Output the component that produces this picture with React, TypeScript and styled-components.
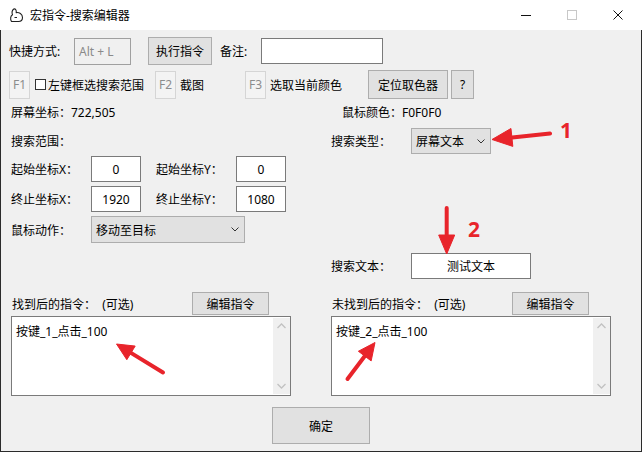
import React from 'react';
import styled, { createGlobalStyle } from 'styled-components';

const GlobalStyle = createGlobalStyle`
  html, body {
    margin: 0;
    padding: 0;
    background: #ffffff;
  }
  body {
    font-family: "Noto Sans", "Noto Sans CJK SC", sans-serif;
    font-size: 12px;
    color: #000;
  }
`;

const Window = styled.div`
  width: 642px;
  height: 452px;
  position: relative;
  overflow: hidden;
  display: flex;
  flex-direction: column;
`;

const TitleBar = styled.div`
  height: 30px;
  flex-shrink: 0;
  background: #ffffff;
  display: flex;
  align-items: center;
`;

const AppIcon = styled.svg`
  width: 16px;
  height: 16px;
  margin-left: 8px;
`;

const TitleText = styled.div`
  margin-left: 6px;
  font-size: 12px;
  flex: 1;
`;

const Controls = styled.div`
  display: flex;
  height: 30px;
  margin-right: 1px;
`;

const ControlButton = styled.div`
  width: 46px;
  height: 30px;
  display: flex;
  align-items: center;
  justify-content: center;
`;

const Body = styled.div`
  flex: 1;
  background: #f0f0f0;
  border: 1px solid #2b2b2b;
  border-top: none;
  padding-left: 8px;
  display: flex;
  flex-direction: column;
`;

const Row = styled.div<{ $top?: number; $left?: number; $h: number }>`
  display: flex;
  align-items: center;
  height: ${p => p.$h}px;
  margin-top: ${p => p.$top ?? 0}px;
  padding-left: ${p => p.$left ?? 0}px;
  flex-shrink: 0;
`;

const Cell = styled.div<{ $w: number; $ml?: number }>`
  width: ${p => p.$w}px;
  margin-left: ${p => p.$ml ?? 0}px;
  display: flex;
  align-items: center;
  flex-shrink: 0;
  white-space: pre;
`;

const Text = styled.span<{ $ml?: number }>`
  margin-left: ${p => p.$ml ?? 0}px;
  white-space: pre;
`;

const TextBox = styled.div<{ $w: number; $h: number; $center?: boolean; $readonly?: boolean }>`
  box-sizing: border-box;
  width: ${p => p.$w}px;
  height: ${p => p.$h}px;
  border: 1px solid ${p => (p.$readonly ? '#a0a0a0' : '#7a7a7a')};
  background: ${p => (p.$readonly ? '#f0f0f0' : '#ffffff')};
  color: ${p => (p.$readonly ? '#8a8a8a' : '#000')};
  display: flex;
  align-items: center;
  justify-content: ${p => (p.$center ? 'center' : 'flex-start')};
  padding-left: ${p => (p.$center ? 0 : 4)}px;
  flex-shrink: 0;
  white-space: pre;
`;

const Button = styled.div<{ $w: number; $h: number; $ml?: number }>`
  box-sizing: border-box;
  width: ${p => p.$w}px;
  height: ${p => p.$h}px;
  margin-left: ${p => p.$ml ?? 0}px;
  border: 1px solid #adadad;
  background: #e1e1e1;
  display: flex;
  align-items: center;
  justify-content: center;
  flex-shrink: 0;
`;

const FKey = styled.div`
  box-sizing: border-box;
  width: 21px;
  height: 28px;
  border: 1px solid #d5d5d5;
  background: #f3f3f3;
  color: #8c8c8c;
  display: flex;
  align-items: center;
  justify-content: center;
  flex-shrink: 0;
`;

const CheckBox = styled.div`
  box-sizing: border-box;
  width: 11px;
  height: 11px;
  margin-left: 5px;
  border: 1px solid #333333;
  background: #ffffff;
  flex-shrink: 0;
`;

const Select = styled.div<{ $w: number; $h: number }>`
  box-sizing: border-box;
  width: ${p => p.$w}px;
  height: ${p => p.$h}px;
  border: 1px solid #adadad;
  background: #e1e1e1;
  display: flex;
  align-items: center;
  justify-content: space-between;
  padding: 0 5px 0 4px;
  flex-shrink: 0;
`;

const Lower = styled.div`
  display: flex;
  margin-top: 8px;
`;

const Column = styled.div<{ $w?: number }>`
  display: flex;
  flex-direction: column;
  width: ${p => (p.$w ? `${p.$w}px` : 'auto')};
`;

const Panels = styled.div`
  display: flex;
  gap: 40px;
  margin-top: 13px;
  padding-left: 2px;
`;

const Panel = styled.div`
  width: 280px;
  display: flex;
  flex-direction: column;
`;

const TextArea = styled.div`
  box-sizing: border-box;
  margin-top: 1px;
  width: 280px;
  height: 80px;
  border: 1px solid #7a7a7a;
  background: #ffffff;
  display: flex;
`;

const AreaContent = styled.div`
  flex: 1;
  padding: 5px 0 0 4px;
  white-space: pre;
`;

const ScrollBar = styled.div`
  width: 17px;
  margin: 1px 0;
  background: #f0f0f0;
  display: flex;
  flex-direction: column;
  justify-content: space-between;
  align-items: center;
  padding: 5px 0;
  box-sizing: border-box;
`;

const Overlay = styled.svg`
  position: absolute;
  left: 0;
  top: 0;
  width: 642px;
  height: 452px;
  pointer-events: none;
`;

const Chevron = ({ up }: { up?: boolean }) => (
  <svg width="8" height="5" viewBox="0 0 8 5">
    <polyline
      points={up ? '0.5,4.5 4,1 7.5,4.5' : '0.5,0.5 4,4 7.5,0.5'}
      fill="none"
      stroke="#333"
      strokeWidth="1"
    />
  </svg>
);

const ScrollArrow = ({ up }: { up?: boolean }) => (
  <svg width="9" height="6" viewBox="0 0 9 6">
    <polyline
      points={up ? '0.5,5 4.5,1 8.5,5' : '0.5,1 4.5,5 8.5,1'}
      fill="none"
      stroke="#c2c2c2"
      strokeWidth="1.3"
    />
  </svg>
);

type Pt = [number, number];

const Arrow = ({ tail, tip, len, half }: { tail: Pt; tip: Pt; len: number; half: number }) => {
  const dx = tip[0] - tail[0];
  const dy = tip[1] - tail[1];
  const d = Math.hypot(dx, dy);
  const ux = dx / d;
  const uy = dy / d;
  const bx = tip[0] - ux * len;
  const by = tip[1] - uy * len;
  const p1 = `${bx - uy * half},${by + ux * half}`;
  const p2 = `${bx + uy * half},${by - ux * half}`;
  return (
    <g fill="#e8242b" stroke="#e8242b">
      <line x1={tail[0]} y1={tail[1]} x2={bx + ux * 2} y2={by + uy * 2} strokeWidth="4" strokeLinecap="round" />
      <polygon points={`${tip[0]},${tip[1]} ${p1} ${p2}`} strokeWidth="1" strokeLinejoin="round" />
    </g>
  );
};

const CommandPanel = ({ title, text }: { title: string; text: string }) => (
  <Panel>
    <Row $h={23}>
      <Cell $w={181}>
        <Text $ml={1}>{title}</Text>
      </Cell>
      <Button $w={77} $h={23}>编辑指令</Button>
    </Row>
    <TextArea>
      <AreaContent>{text}</AreaContent>
      <ScrollBar>
        <ScrollArrow up />
        <ScrollArrow />
      </ScrollBar>
    </TextArea>
  </Panel>
);

export default function App() {
  return (
    <>
      <GlobalStyle />
      <Window>
        <TitleBar>
          <AppIcon viewBox="0 0 16 16">
            <path
              d="M3.5 14.5 C2 12 2.5 9 4.5 7.8 C3.8 6 4 3.5 5.8 2 C7.5 1.5 8.6 3.2 8.2 5.6 C11 5 14.5 7 14.5 10.5 C14.5 13.5 12.5 14.5 10.5 14.5 Z M6.5 10.5 L9 10.5"
              fill="none"
              stroke="#222"
              strokeWidth="1.1"
              strokeLinejoin="round"
            />
          </AppIcon>
          <TitleText>宏指令-搜索编辑器</TitleText>
          <Controls>
            <ControlButton>
              <svg width="10" height="10" viewBox="0 0 10 10">
                <line x1="0" y1="5.5" x2="10" y2="5.5" stroke="#111" strokeWidth="1" />
              </svg>
            </ControlButton>
            <ControlButton>
              <svg width="10" height="10" viewBox="0 0 10 10">
                <rect x="0.5" y="0.5" width="9" height="9" fill="none" stroke="#c8c8c8" strokeWidth="1" />
              </svg>
            </ControlButton>
            <ControlButton>
              <svg width="10" height="10" viewBox="0 0 10 10">
                <path d="M0.5 0.5 L9.5 9.5 M9.5 0.5 L0.5 9.5" stroke="#111" strokeWidth="1" />
              </svg>
            </ControlButton>
          </Controls>
        </TitleBar>

        <Body>
          <Row $top={7} $h={28}>
            <Cell $w={65}>快捷方式:</Cell>
            <TextBox $w={57} $h={27} $readonly>Alt + L</TextBox>
            <Button $w={64} $h={28} $ml={17}>执行指令</Button>
            <Cell $w={41} $ml={8}>备注:</Cell>
            <TextBox $w={122} $h={26} />
          </Row>

          <Row $top={5} $h={29}>
            <Cell $w={146}>
              <FKey>F1</FKey>
              <CheckBox />
              <Text $ml={2}>左键框选搜索范围</Text>
            </Cell>
            <Cell $w={90}>
              <FKey>F2</FKey>
              <Text $ml={4}>截图</Text>
            </Cell>
            <Cell $w={123}>
              <FKey>F3</FKey>
              <Text $ml={4}>选取当前颜色</Text>
            </Cell>
            <Button $w={80} $h={29}>定位取色器</Button>
            <Button $w={23} $h={29} $ml={3}>?</Button>
          </Row>

          <Row $top={5} $h={16} $left={2}>
            <Cell $w={331}>屏幕坐标：722,505</Cell>
            <Cell $w={150}>鼠标颜色：F0F0F0</Cell>
          </Row>

          <Lower>
            <Column $w={322}>
              <Row $h={26} $left={2}>搜索范围：</Row>
              <Row $top={2} $h={26} $left={2}>
                <Cell $w={80}>起始坐标X：</Cell>
                <TextBox $w={50} $h={26} $center>0</TextBox>
                <Cell $w={80} $ml={15}>起始坐标Y：</Cell>
                <TextBox $w={50} $h={26} $center>0</TextBox>
              </Row>
              <Row $top={4} $h={26} $left={2}>
                <Cell $w={80}>终止坐标X：</Cell>
                <TextBox $w={50} $h={26} $center>1920</TextBox>
                <Cell $w={80} $ml={15}>终止坐标Y：</Cell>
                <TextBox $w={50} $h={26} $center>1080</TextBox>
              </Row>
              <Row $top={4} $h={27} $left={2}>
                <Cell $w={80}>鼠标动作：</Cell>
                <Select $w={154} $h={27}>
                  <span>移动至目标</span>
                  <Chevron />
                </Select>
              </Row>
            </Column>
            <Column>
              <Row $h={26}>
                <Cell $w={80}>搜索类型：</Cell>
                <Select $w={80} $h={26}>
                  <span>屏幕文本</span>
                  <Chevron />
                </Select>
              </Row>
              <Row $top={99} $h={26}>
                <Cell $w={80}>搜索文本：</Cell>
                <TextBox $w={120} $h={26} $center>测试文本</TextBox>
              </Row>
            </Column>
          </Lower>

          <Panels>
            <CommandPanel title="找到后的指令：  (可选)" text="按键_1_点击_100" />
            <CommandPanel title="未找到后的指令：  (可选)" text="按键_2_点击_100" />
          </Panels>

          <Row $top={11} $h={37} $left={263}>
            <Button $w={98} $h={37}>确定</Button>
          </Row>
        </Body>

        <Overlay viewBox="0 0 642 452">
          <Arrow tail={[550, 133.5]} tip={[492, 139.5]} len={20} half={9} />
          <Arrow tail={[446.7, 208]} tip={[446.7, 254]} len={19} half={8} />
          <Arrow tail={[163, 372.5]} tip={[116.5, 344]} len={17} half={8} />
          <Arrow tail={[347.5, 379]} tip={[375, 342.5]} len={17} half={8} />
          <text x="560" y="137.5" fill="#e8242b" fontFamily="Noto Sans, sans-serif" fontWeight="700" fontSize="21">1</text>
          <text x="468" y="237" fill="#e8242b" fontFamily="Noto Sans, sans-serif" fontWeight="700" fontSize="21">2</text>
        </Overlay>
      </Window>
    </>
  );
}
